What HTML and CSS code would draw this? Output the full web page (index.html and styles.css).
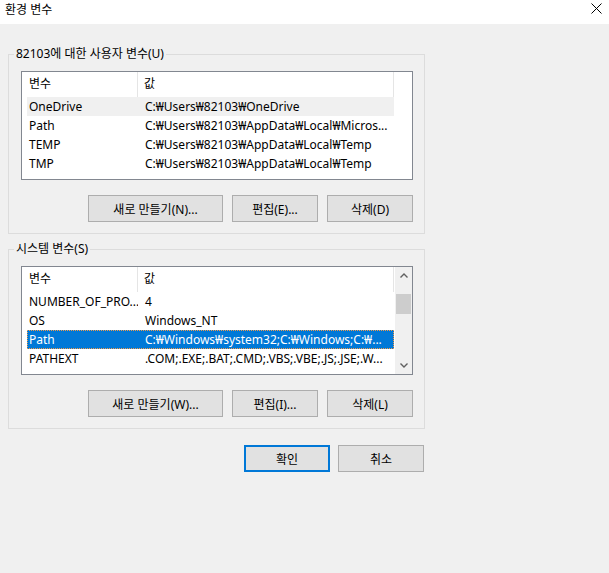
FILE: index.html
```html
<!DOCTYPE html>
<html lang="ko">
<head>
  <meta charset="UTF-8" />
  <title>환경 변수</title>
  <link rel="stylesheet" href="styles.css">
</head>
<body>
  <div class="titlebar">
    <span class="title">환경 변수</span>
    <svg class="close" width="11" height="11" viewBox="0 0 11 11">
      <path d="M0.5 0.5 L10.5 10.5 M10.5 0.5 L0.5 10.5" stroke="#000" stroke-width="1" fill="none"/>
    </svg>
  </div>

  <div class="main">
    <fieldset class="group">
      <legend>82103에 대한 사용자 변수(U)</legend>
      <div class="listview">
        <div class="lv-body">
          <div class="lv-header">
            <div class="col1">변수</div>
            <div class="col2">값</div>
          </div>
          <div class="lv-row inactive">
            <div class="col1">OneDrive</div>
            <div class="col2">C:₩Users₩82103₩OneDrive</div>
          </div>
          <div class="lv-row">
            <div class="col1">Path</div>
            <div class="col2">C:₩Users₩82103₩AppData₩Local₩Micros...</div>
          </div>
          <div class="lv-row">
            <div class="col1">TEMP</div>
            <div class="col2">C:₩Users₩82103₩AppData₩Local₩Temp</div>
          </div>
          <div class="lv-row">
            <div class="col1">TMP</div>
            <div class="col2">C:₩Users₩82103₩AppData₩Local₩Temp</div>
          </div>
        </div>
      </div>
      <div class="buttons">
        <button class="btn wide">새로 만들기(N)...</button>
        <button class="btn">편집(E)...</button>
        <button class="btn">삭제(D)</button>
      </div>
    </fieldset>

    <fieldset class="group">
      <legend>시스템 변수(S)</legend>
      <div class="listview">
        <div class="lv-body">
          <div class="lv-header">
            <div class="col1">변수</div>
            <div class="col2">값</div>
          </div>
          <div class="lv-row">
            <div class="col1">NUMBER_OF_PRO...</div>
            <div class="col2">4</div>
          </div>
          <div class="lv-row">
            <div class="col1">OS</div>
            <div class="col2">Windows_NT</div>
          </div>
          <div class="lv-row selected">
            <div class="col1">Path</div>
            <div class="col2">C:₩Windows₩system32;C:₩Windows;C:₩...</div>
          </div>
          <div class="lv-row">
            <div class="col1">PATHEXT</div>
            <div class="col2">.COM;.EXE;.BAT;.CMD;.VBS;.VBE;.JS;.JSE;.W...</div>
          </div>
        </div>
        <div class="scrollbar">
          <div class="sb-arrow">
            <svg width="8" height="5" viewBox="0 0 8 5"><polyline points="0.5,4.5 4,1 7.5,4.5" stroke="#606060" stroke-width="1.4" fill="none"/></svg>
          </div>
          <div class="sb-track"><div class="sb-thumb"></div></div>
          <div class="sb-arrow">
            <svg width="8" height="5" viewBox="0 0 8 5"><polyline points="0.5,0.5 4,4 7.5,0.5" stroke="#606060" stroke-width="1.4" fill="none"/></svg>
          </div>
        </div>
      </div>
      <div class="buttons">
        <button class="btn wide">새로 만들기(W)...</button>
        <button class="btn">편집(I)...</button>
        <button class="btn">삭제(L)</button>
      </div>
    </fieldset>

    <div class="footer">
      <button class="btn default">확인</button>
      <button class="btn">취소</button>
    </div>
  </div>
</body>
</html>
```

FILE: styles.css
```css
body {
  margin: 0;
  width: 609px;
  height: 573px;
  background-color: #f0f0f0;
  font-family: 'Noto Sans', 'Noto Sans CJK KR', sans-serif;
  font-size: 12px;
  color: #000;
}

.titlebar {
  height: 24px;
  background: #fff;
  display: flex;
  align-items: center;
  justify-content: space-between;
}

.title {
  padding-left: 5px;
  margin-top: -6px;
}

.close {
  margin-right: 7px;
  margin-top: -7px;
}

.main {
  padding-left: 8px;
}

.group {
  width: 417px;
  box-sizing: border-box;
  margin: 22px 0 0;
  padding: 9px 11px 11px 12px;
  border: 1px solid #dcdcdc;
}

.group + .group {
  margin-top: 7px;
}

.group legend {
  padding: 0 2px;
  margin-left: -7px;
  line-height: 16px;
  height: 16px;
}

.listview {
  height: 109px;
  box-sizing: border-box;
  border: 1px solid #828790;
  background: #fff;
  display: flex;
}

.lv-body {
  flex: 1;
  overflow: hidden;
}

.lv-header {
  height: 25px;
  display: flex;
  align-items: center;
  width: 372px;
}

.lv-header .col1 {
  width: 116px;
  box-sizing: border-box;
  padding-left: 7px;
  height: 25px;
  line-height: 23px;
  border-right: 1px solid #e5e5e5;
}

.lv-header .col2 {
  flex: 1;
  height: 25px;
  line-height: 23px;
  padding-left: 6px;
  border-right: 1px solid #e5e5e5;
}

.lv-row {
  height: 19px;
  line-height: 19px;
  margin-left: 5px;
  width: 367px;
  display: flex;
  white-space: nowrap;
}

.lv-row .col1 {
  width: 111px;
  padding-left: 2px;
  box-sizing: border-box;
  overflow: hidden;
}

.lv-row .col2 {
  flex: 1;
  padding-left: 7px;
  overflow: hidden;
}

.lv-row.inactive {
  background: #f0f0f0;
}

.lv-row.selected {
  background: #0078d7;
  color: #fff;
  outline: 1px dotted #f29b4a;
  outline-offset: -1px;
}

.scrollbar {
  width: 17px;
  background: #f0f0f0;
  display: flex;
  flex-direction: column;
}

.sb-arrow {
  height: 17px;
  display: flex;
  align-items: center;
  justify-content: center;
}

.sb-track {
  flex: 1;
  padding-top: 10px;
}

.sb-thumb {
  width: 15px;
  height: 20px;
  margin-left: 1px;
  background: #cdcdcd;
}

.buttons {
  display: flex;
  justify-content: flex-end;
  gap: 9px;
  margin-top: 15px;
}

.btn {
  width: 86px;
  height: 27px;
  box-sizing: border-box;
  background: #e1e1e1;
  border: 1px solid #adadad;
  font-family: 'Noto Sans', 'Noto Sans CJK KR', sans-serif;
  font-size: 12px;
  color: #000;
  padding: 0;
}

.btn.wide {
  width: 135px;
}

.btn.default {
  border: 2px solid #0078d7;
}

.footer {
  width: 416px;
  display: flex;
  justify-content: flex-end;
  gap: 8px;
  margin-top: 16px;
}
```
